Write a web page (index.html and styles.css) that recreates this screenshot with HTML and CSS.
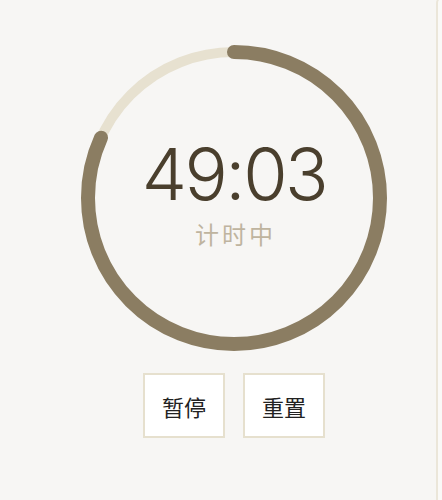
FILE: index.html
```html
<!DOCTYPE html>
<html lang="zh">
<head>
<meta charset="utf-8">
<title>计时器</title>
<link rel="stylesheet" href="styles.css">
</head>
<body>
<div class="app">
  <main class="main">
    <div class="ring">
      <svg class="ring-svg" width="320" height="320" viewBox="0 0 320 320">
        <circle class="track" cx="160" cy="160" r="146"></circle>
        <circle class="progress" cx="160" cy="160" r="146" transform="rotate(-90 160 160)" style="stroke-dasharray: 749.9 917.35"></circle>
      </svg>
      <div class="readout">
        <div class="time">49:03</div>
        <div class="status">计时中</div>
      </div>
    </div>
    <div class="controls">
      <button class="btn">暂停</button>
      <button class="btn">重置</button>
    </div>
  </main>
  <aside class="side"></aside>
</div>
</body>
</html>
```
FILE: styles.css
```css
html, body {
  margin: 0;
  padding: 0;
  background: #f7f6f4;
}
body {
  font-family: "Noto Sans CJK SC", sans-serif;
}
.app {
  display: flex;
  height: 500px;
  overflow: hidden;
}
.main {
  width: 436px;
  flex: none;
  box-sizing: border-box;
  padding: 38px 0 0 32px;
  display: flex;
  flex-direction: column;
  align-items: center;
}
.ring {
  display: grid;
  width: 320px;
  height: 320px;
}
.ring-svg {
  grid-area: 1 / 1;
  display: block;
}
.track {
  fill: none;
  stroke: #e7e1d0;
  stroke-width: 10;
}
.progress {
  fill: none;
  stroke: #8b7d62;
  stroke-width: 14;
  stroke-linecap: round;
}
.readout {
  grid-area: 1 / 1;
  display: flex;
  flex-direction: column;
  align-items: center;
  justify-content: center;
  padding-bottom: 12px;
}
.time {
  font-family: Inter, sans-serif;
  font-weight: 300;
  font-size: 72px;
  line-height: 1;
  color: #4a3f2d;
  letter-spacing: -2.5px;
}
.status {
  margin-top: 12px;
  font-family: "Noto Sans CJK SC", sans-serif;
  font-size: 24px;
  line-height: 1;
  color: #bfb49f;
  letter-spacing: 3px;
  padding-left: 3px;
}
.controls {
  display: flex;
  gap: 18px;
  margin-top: 15px;
}
.btn {
  width: 82px;
  height: 65px;
  box-sizing: border-box;
  border: 2px solid #e6e0ce;
  background: #ffffff;
  border-radius: 0;
  font-family: "Noto Sans CJK SC", sans-serif;
  font-size: 22px;
  color: #222222;
  padding: 0;
}
.side {
  flex: 1;
  margin-top: -3px;
  border-left: 2px solid #ebe6d9;
  border-top: 2px solid #ebe6d9;
  border-top-left-radius: 12px;
  background: #faf9f7;
}
```
